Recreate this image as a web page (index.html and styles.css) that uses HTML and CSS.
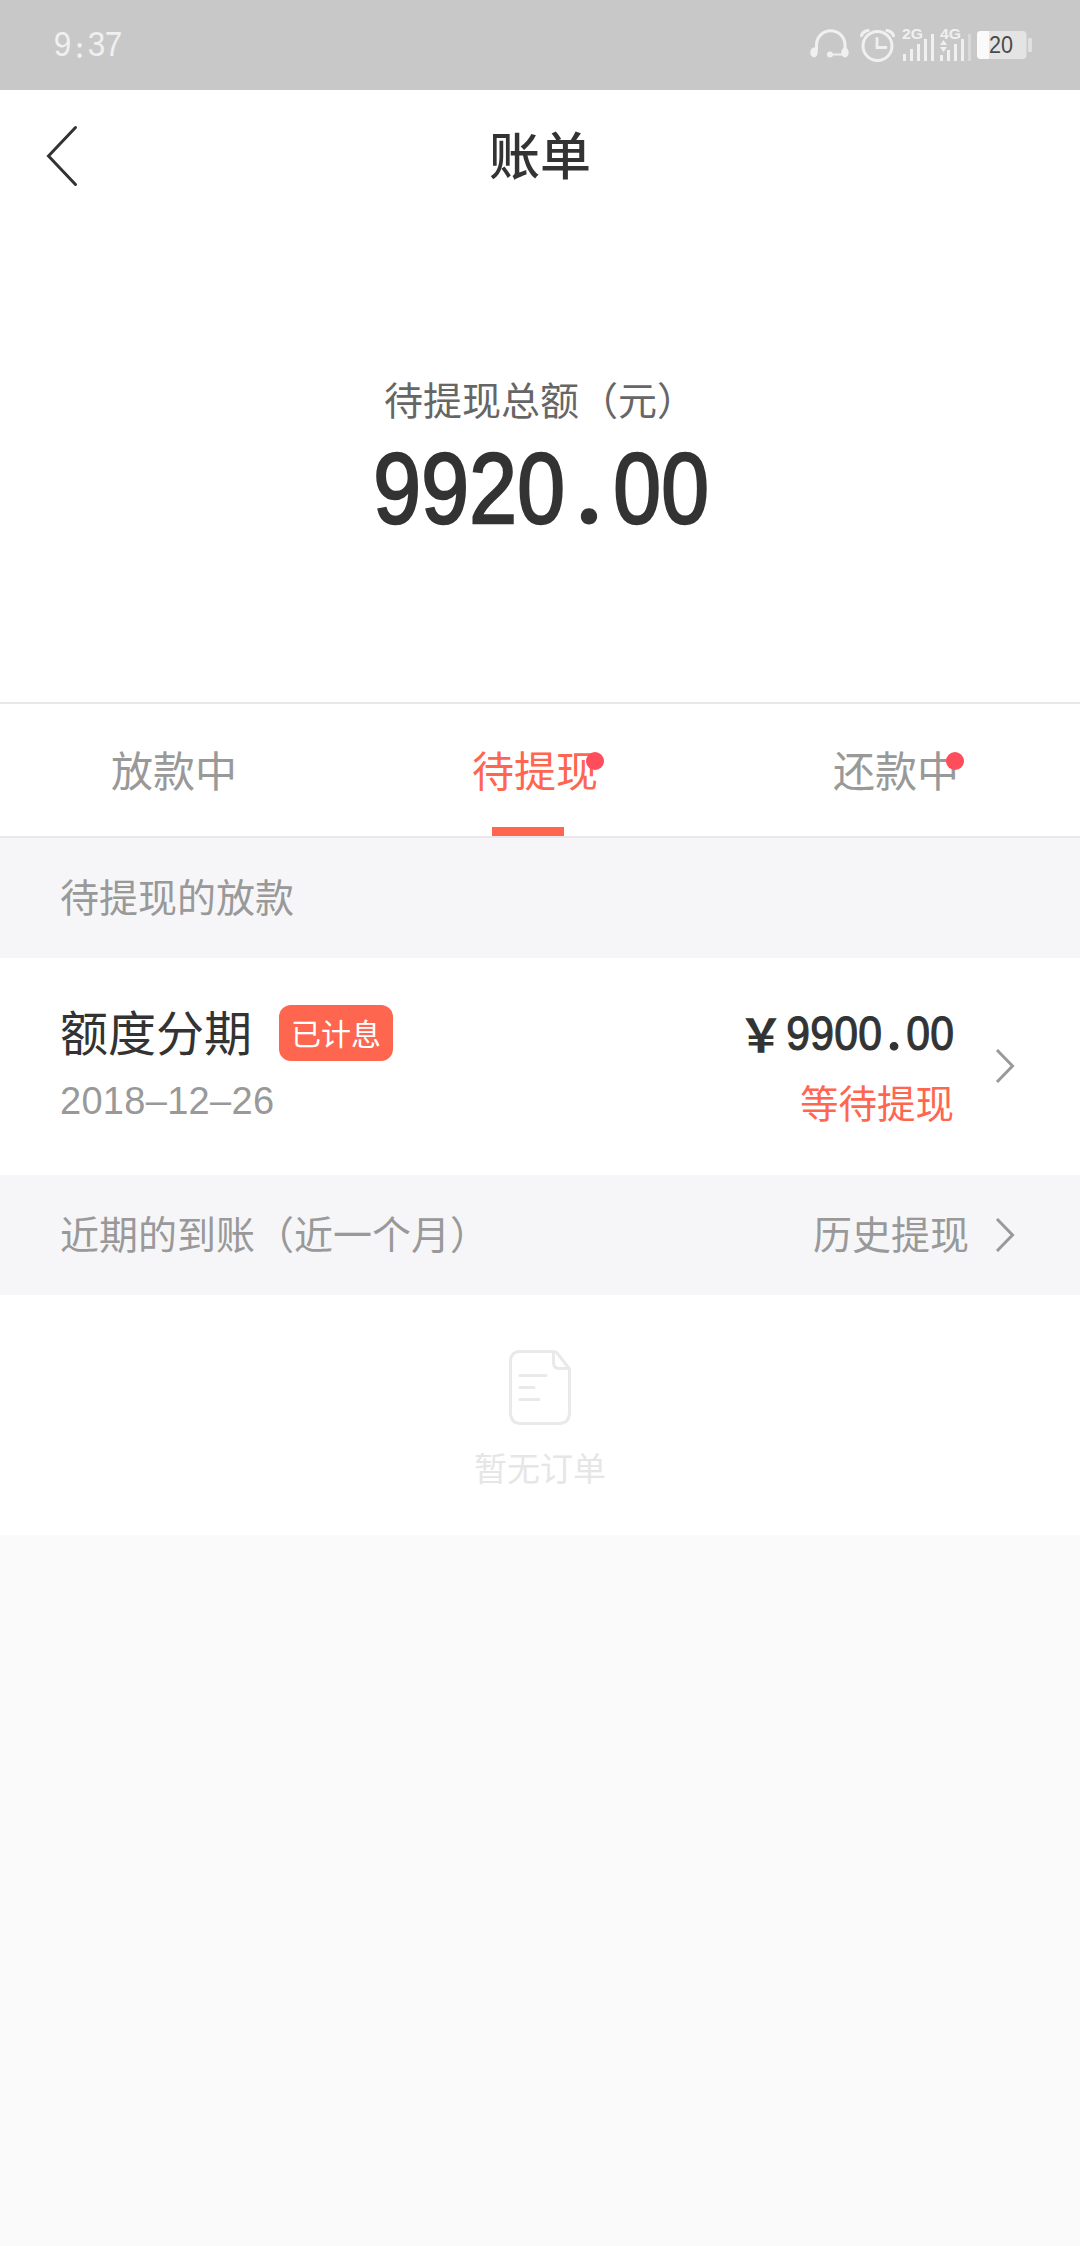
FILE: index.html
```html
<!DOCTYPE html>
<html lang="zh-CN">
<head>
<meta charset="utf-8">
<title>账单</title>
<link rel="stylesheet" href="styles.css">
</head>
<body>
<div class="status">
  <div class="clock"><span>9</span><span class="colon">:</span><span>3</span><span>7</span></div>
  <svg class="status-icons" width="226" height="44" viewBox="0 0 226 44">
    <g fill="none" stroke="#f0f0f0" stroke-linecap="round">
      <path d="M6.500 28V23a14 14 0 0 1 28.500 0V28" stroke-width="3"/>
      <path d="M35 32.500H20" stroke-width="2"/>
      <circle cx="67.500" cy="24" r="14.500" stroke-width="3"/>
      <path d="M67 16.500V25.500H76" stroke-width="2.800"/>
      <path d="M51.500 13.500Q53 9.500 58 8.500M77 8.500Q82 9.500 83.500 13.500" stroke-width="3.200"/>
    </g>
    <g fill="#f0f0f0">
      <ellipse cx="4" cy="30.500" rx="3.700" ry="5"/>
      <ellipse cx="35" cy="30.500" rx="3.700" ry="5"/>
      <circle cx="20" cy="32.500" r="3"/>
      <path d="M93 32h3v7h-3zM100 27h3v12h-3zM107 22h3v17h-3zM114 17h3v22h-3zM121 12h3v27h-3z"/>
      <path d="M130 33h3v6h-3zM137 28h3v11h-3zM144 22h3v17h-3zM151 17h3v22h-3z"/>
      <path d="M133.500 18l3.500 5h-7zM133.500 30l3.500-5h-7z"/>
    </g>
    <path d="M158 12h3v27h-3z" fill="#d9d9d9"/>
    <rect x="167" y="9" width="49.500" height="28" rx="4" fill="#e4e4e4"/>
    <path d="M171 9h8v28h-8a4 4 0 0 1-4-4V13a4 4 0 0 1 4-4z" fill="#fafafa"/>
    <rect x="218" y="16" width="4" height="14" rx="1" fill="#e0e0e0"/>
    <text class="net" x="92" y="17" textLength="21" lengthAdjust="spacingAndGlyphs">2G</text>
    <text class="net" x="130" y="17" textLength="21" lengthAdjust="spacingAndGlyphs">4G</text>
    <text class="level" x="179" y="31" textLength="24" lengthAdjust="spacingAndGlyphs">20</text>
  </svg>
</div>

<header class="bar">
  <svg class="back" width="32" height="62" viewBox="0 0 32 62"><path d="M29.500 2.500L2.500 31L29.500 59.500"/></svg>
  <h1>账单</h1>
</header>

<section class="summary">
  <div class="label">待提现总额（元）</div>
  <div class="total"><span>9</span><span>9</span><span>2</span><span>0</span><span class="dot">.</span><span>0</span><span>0</span></div>
</section>

<nav class="tabs">
  <div class="tab">放款中</div>
  <div class="tab active">待提现<i class="badge"></i></div>
  <div class="tab">还款中<i class="badge"></i></div>
</nav>

<div class="strip">待提现的放款</div>

<div class="item">
  <div class="info">
    <div class="name">额度分期<span class="tag">已计息</span></div>
    <div class="date">2018–12–26</div>
  </div>
  <div class="sum">
    <div class="amount"><b>￥</b><span>9</span><span>9</span><span>0</span><span>0</span><span class="dot">.</span><span>0</span><span>0</span></div>
    <div class="state">等待提现</div>
  </div>
  <svg class="chevron" width="20" height="36" viewBox="0 0 20 36"><path d="M2 2L17.500 18L2 34"/></svg>
</div>

<div class="strip">
  <span>近期的到账（近一个月）</span>
  <span class="history">历史提现</span>
  <svg class="chevron" width="20" height="36" viewBox="0 0 20 36"><path d="M2 2L17.500 18L2 34"/></svg>
</div>

<div class="empty">
  <svg width="62" height="75" viewBox="0 0 62 75"><path d="M44.500 1.500H10Q1.500 2.500 1.500 11V64Q2.500 73.500 11 73.500H51Q59.500 73 60.500 64V19L48.500 3.500Q47 1.500 44.500 1.500V13Q45 18.500 50 18.500H60.500M11 25.500H37M11 37.500H25M11 49.500H30"/></svg>
  <p>暂无订单</p>
</div>
</body>
</html>
```

FILE: styles.css
```css
* { box-sizing: border-box; }
body {
  margin: 0;
  min-height: 2246px;
  background: #fafafa;
  color: #333;
  font-family: "Noto Sans CJK SC", sans-serif;
}
svg { display: block; flex: none; }

.status {
  height: 90px;
  display: flex;
  align-items: center;
  justify-content: space-between;
  padding: 0 44px 0 54px;
  background: #c8c8c8;
}
.clock, .total, .amount { display: flex; font-family: "Liberation Sans", sans-serif; }
.clock { font-size: 35px; line-height: 40px; color: #f0f0f0; }
.clock span { width: 17px; display: flex; justify-content: center; transform: scaleX(.9); }
.clock .colon { padding-top: 3px; font-family: Lato, sans-serif; font-weight: 900; font-size: 28px; }
.status-icons { margin-bottom: 2px; }
.net { font: bold 15px "Liberation Sans", sans-serif; fill: #f0f0f0; }
.level { font: 23px "Liberation Sans", sans-serif; fill: #4a4a4a; }

.bar {
  height: 132px;
  display: grid;
  grid-template-columns: 120px 1fr 120px;
  align-items: center;
  background: #fff;
}
.back { margin-left: 46px; }
.back path { fill: none; stroke: #333; stroke-width: 3; stroke-linecap: round; }
h1 { margin: 0 0 6px; text-align: center; font-size: 51px; line-height: 60px; font-weight: 500; }

.summary {
  height: 480px;
  padding-top: 151px;
  display: flex;
  flex-direction: column;
  align-items: center;
  background: #fff;
}
.label { font-size: 39px; line-height: 50px; color: #666; }
.total { margin: 10px 0 0 2px; font-size: 101px; line-height: 110px; -webkit-text-stroke: 2.5px #333; }
.total span { width: 48px; display: flex; justify-content: center; transform: scaleX(.85); }
.total .dot, .amount .dot { font-family: Lato, sans-serif; font-weight: bold; transform: none; }
.total .dot { line-height: 102px; -webkit-text-stroke-width: 1px; }
.amount .dot { line-height: 66px; }

.tabs {
  height: 136px;
  display: flex;
  justify-content: space-between;
  padding: 0 121px 0 111px;
  border-top: 2px solid #e8e8ea;
  border-bottom: 2px solid #e8e8ea;
  background: #fff;
  font-size: 42px;
  line-height: 129px;
  color: #999;
}
.tab { position: relative; width: 126px; }
.active { color: #ff664f; }
.active::after {
  content: "";
  position: absolute;
  left: 20px;
  bottom: 0;
  width: 72px;
  height: 9px;
  background: #ff664f;
}
.badge {
  position: absolute;
  left: 113px;
  top: 48px;
  width: 18px;
  height: 18px;
  border-radius: 50%;
  background: #ff4d5c;
}
.active .badge { left: 114px; }

.strip {
  height: 120px;
  display: flex;
  align-items: center;
  padding: 0 65px 6px 60px;
  background: #f6f6f8;
  color: #999;
  font-size: 39px;
  line-height: 60px;
}
.history { margin-left: auto; }
.chevron { margin-left: 26px; }
.chevron path { fill: none; stroke: #999; stroke-width: 3; }
.strip .chevron { margin-top: 6px; }

.item {
  height: 217px;
  display: flex;
  align-items: center;
  padding: 0 65px 2px 60px;
  background: #fff;
}
.info { flex: 1; }
.name { display: flex; align-items: center; font-size: 48px; line-height: 68px; }
.tag {
  margin: 5px 0 0 27px;
  width: 114px;
  height: 56px;
  border-radius: 12px;
  background: #ff664f;
  color: #fff;
  font-size: 30px;
  line-height: 55px;
  text-align: center;
}
.date { padding-top: 3px; font: 38px/68px "Liberation Sans", sans-serif; letter-spacing: .3px; color: #999; }
.amount { justify-content: flex-end; font-size: 49px; line-height: 71px; -webkit-text-stroke: 1.2px #333; }
.amount span { width: 24px; display: flex; justify-content: center; transform: scaleX(.87); }
.amount b { margin-right: 2px; font: bold 46px/68px "Noto Sans CJK SC", sans-serif; -webkit-text-stroke: 0; }
.state { font-size: 38.5px; line-height: 65px; text-align: right; color: #ff664f; }
.item .chevron { margin-left: 41px; }

.empty {
  height: 240px;
  display: flex;
  flex-direction: column;
  align-items: center;
  padding-top: 55px;
  background: #fff;
  color: #e6e6e6;
}
.empty path { fill: none; stroke: #e9e9e9; stroke-width: 3; stroke-linecap: round; stroke-linejoin: round; }
.empty p { margin: 17px 0 0; font-size: 33px; line-height: 50px; }
```
